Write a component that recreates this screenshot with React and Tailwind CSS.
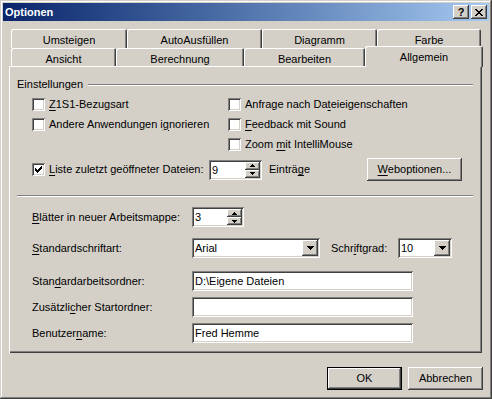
import React from 'react';

const raised = 'shadow-[inset_-1px_-1px_0_#404040,inset_1px_1px_0_#fff,inset_-2px_-2px_0_#808080]';
const sunken = 'shadow-[inset_1px_1px_0_#808080,inset_-1px_-1px_0_#fff,inset_2px_2px_0_#404040,inset_-2px_-2px_0_#d4d0c8]';
const tabEdge = 'shadow-[inset_1px_1px_0_#fff,inset_-1px_0_0_#404040,inset_-2px_0_0_#808080]';
const etched = 'h-[2px] border-t border-t-[#808080] border-b border-b-white';

// underlined access key
const K = ({ children }) => <span className="underline underline-offset-[2px]">{children}</span>;

function Check({ checked }) {
  return (
    <span className={`w-[13px] h-[13px] shrink-0 bg-white flex items-center justify-center ${sunken}`}>
      {checked && (
        <svg width="7" height="7" viewBox="0 0 7 7" shapeRendering="crispEdges">
          <path d="M0 2h1v3h-1zM1 3h1v3h-1zM2 4h1v3h-1zM3 3h1v3h-1zM4 2h1v3h-1zM5 1h1v3h-1zM6 0h1v3h-1z" fill="#000" />
        </svg>
      )}
    </span>
  );
}

function CheckRow({ checked, children, className = '' }) {
  return (
    <div className={`flex items-center gap-[4px] h-[20px] ${className}`}>
      <Check checked={checked} />
      <span>{children}</span>
    </div>
  );
}

const Up = () => (
  <svg width="5" height="3" viewBox="0 0 5 3" shapeRendering="crispEdges"><path d="M2 0h1v1h-1zM1 1h3v1h-3zM0 2h5v1h-5z" fill="#000" /></svg>
);
const Down = () => (
  <svg width="5" height="3" viewBox="0 0 5 3" shapeRendering="crispEdges"><path d="M0 0h5v1h-5zM1 1h3v1h-3zM2 2h1v1h-1z" fill="#000" /></svg>
);
const Drop = () => (
  <svg width="7" height="4" viewBox="0 0 7 4" shapeRendering="crispEdges"><path d="M0 0h7v1h-7zM1 1h5v1h-5zM2 2h3v1h-3zM3 3h1v1h-1z" fill="#000" /></svg>
);

function Spin({ value, className }) {
  return (
    <div className={`${className} h-[20px] bg-white p-[2px] flex ${sunken}`}>
      <span className="flex-1 pl-[1px] leading-[16px]">{value}</span>
      <div className="w-[15px] flex flex-col">
        <div className={`h-[8px] bg-[#d4d0c8] flex items-center justify-center ${raised}`}><Up /></div>
        <div className={`h-[8px] bg-[#d4d0c8] flex items-center justify-center ${raised}`}><Down /></div>
      </div>
    </div>
  );
}

function Combo({ value, className }) {
  return (
    <div className={`${className} h-[20px] bg-white p-[2px] flex ${sunken}`}>
      <span className="flex-1 pl-[1px] leading-[16px]">{value}</span>
      <div className={`w-[16px] h-[16px] bg-[#d4d0c8] flex items-center justify-center ${raised}`}><Drop /></div>
    </div>
  );
}

function Field({ value }) {
  return (
    <div className={`w-[221px] h-[20px] bg-white p-[2px] pl-[3px] leading-[16px] ${sunken}`}>{value}</div>
  );
}

function Tab({ w, children }) {
  return (
    <div className={`${w} h-full bg-[#d4d0c8] rounded-t-[2px] pt-[5px] text-center ${tabEdge}`}>{children}</div>
  );
}

function Row({ label, children, className = '' }) {
  return (
    <div className={`h-[20px] flex items-center pl-[23px] ${className}`}>
      <span className="w-[160px]">{label}</span>
      {children}
    </div>
  );
}

export default function App() {
  return (
    <div className="w-[492px] h-[399px] bg-[#d4d0c8] p-[3px] flex flex-col text-black text-[11px] leading-[13px] font-['Liberation_Sans',Arial,sans-serif] shadow-[inset_-1px_-1px_0_#404040,inset_1px_1px_0_#d4d0c8,inset_-2px_-2px_0_#808080,inset_2px_2px_0_#fff]">
      {/* title bar */}
      <div className="h-[18px] flex items-center bg-linear-to-r from-[#0a246a] to-[#a6caf0] pl-[2px] pr-[2px]">
        <span className="flex-1 text-white font-bold">Optionen</span>
        <div className={`w-[16px] h-[14px] bg-[#d4d0c8] flex items-center justify-center font-bold text-[11px] leading-[11px] ${raised}`}>?</div>
        <div className={`w-[16px] h-[14px] ml-[2px] bg-[#d4d0c8] flex items-center justify-center ${raised}`}>
          <svg width="8" height="7" viewBox="0 0 8 7" shapeRendering="crispEdges">
            <path d="M0 0h2v1h-2zM6 0h2v1h-2zM1 1h2v1h-2zM5 1h2v1h-2zM2 2h4v1h-4zM3 3h2v1h-2zM2 4h4v1h-4zM1 5h2v1h-2zM5 5h2v1h-2zM0 6h2v1h-2zM6 6h2v1h-2z" fill="#000" />
          </svg>
        </div>
      </div>

      {/* tabs */}
      <div className="mt-[8px] ml-[8px] h-[19px] flex">
        <Tab w="w-[116px]">Umsteigen</Tab>
        <Tab w="w-[135px]">AutoAusfüllen</Tab>
        <Tab w="w-[115px]">Diagramm</Tab>
        <Tab w="w-[104px]">Farbe</Tab>
      </div>
      <div className="ml-[8px] h-[18px] flex items-start">
        <Tab w="w-[105px]">Ansicht</Tab>
        <Tab w="w-[128px]">Berechnung</Tab>
        <Tab w="w-[121px]">Bearbeiten</Tab>
        <div className={`relative z-10 w-[118px] h-[21px] -mt-[2px] bg-[#d4d0c8] rounded-t-[2px] pt-[5px] text-center ${tabEdge}`}>Allgemein</div>
      </div>

      {/* panel */}
      <div className="ml-[6px] w-[473px] h-[287px] flex flex-col pt-[12px] shadow-[inset_1px_1px_0_#fff,inset_-1px_-1px_0_#404040,inset_-2px_-2px_0_#808080]">
        <div className="h-[13px] flex items-center pl-[8px] pr-[9px]">
          <span>Einstellungen</span>
          <div className={`flex-1 ml-[5px] ${etched}`} />
        </div>

        <div className="mt-[3px] pl-[23px] grid grid-cols-[196px_1fr]">
          <CheckRow><K>Z</K>1S1-Bezugsart</CheckRow>
          <CheckRow>Anfrage nach Da<K>t</K>eieigenschaften</CheckRow>
          <CheckRow>Andere Anwendungen i<K>g</K>norieren</CheckRow>
          <CheckRow><K>F</K>eedback mit Sound</CheckRow>
          <div />
          <CheckRow>Zoom <K>m</K>it IntelliMouse</CheckRow>
        </div>

        <div className="mt-[4px] h-[23px] flex items-center pl-[23px]">
          <CheckRow checked className="w-[177px]"><K>L</K>iste zuletzt geöffneter Dateien:</CheckRow>
          <Spin value="9" className="w-[53px]" />
          <span className="ml-[7px] w-[98px]">Einträ<K>g</K>e</span>
          <div className={`w-[95px] h-[23px] flex items-center justify-center ${raised}`}><span><K>W</K>eboptionen...</span></div>
        </div>

        <div className={`mt-[14px] ml-[8px] mr-[9px] ${etched}`} />

        <Row className="mt-[10px]" label={<><K>B</K>lätter in neuer Arbeitsmappe:</>}>
          <Spin value="3" className="w-[52px]" />
        </Row>
        <Row className="mt-[11px]" label={<><K>S</K>tandardschriftart:</>}>
          <Combo value="Arial" className="w-[128px]" />
          <span className="ml-[11px] w-[67px]">Schr<K>i</K>ftgrad:</span>
          <Combo value="10" className="w-[54px]" />
        </Row>
        <Row className="mt-[13px]" label={<>Stan<K>d</K>ardarbeitsordner:</>}>
          <Field value="D:\Eigene Dateien" />
        </Row>
        <Row className="mt-[6px]" label={<>Zusätzli<K>c</K>her Startordner:</>}>
          <Field value="" />
        </Row>
        <Row className="mt-[6px]" label={<>Benutzer<K>n</K>ame:</>}>
          <Field value="Fred Hemme" />
        </Row>
      </div>

      {/* buttons */}
      <div className="mt-[14px] h-[23px] flex justify-end gap-[6px] pr-[6px]">
        <div className="w-[75px] h-[23px] border border-black">
          <div className={`w-full h-full flex items-center justify-center ${raised}`}>OK</div>
        </div>
        <div className={`w-[75px] h-[23px] flex items-center justify-center ${raised}`}>Abbrechen</div>
      </div>
    </div>
  );
}
